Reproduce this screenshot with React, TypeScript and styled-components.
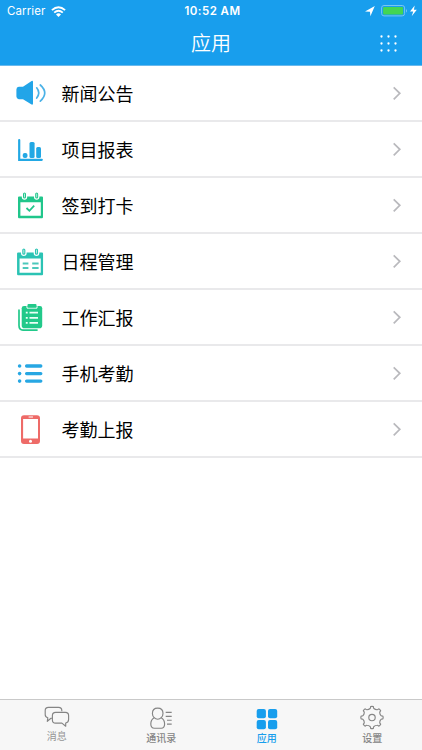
import React from 'react';
import styled, { createGlobalStyle } from 'styled-components';

const GlobalStyle = createGlobalStyle`
  * { box-sizing: border-box; }
  body { margin: 0; background: #fff; }
  svg { display: block; flex: none; }
`;

const Screen = styled.div`
  width: 100%;
  height: 750px;
  display: flex;
  flex-direction: column;
  overflow: hidden;
  background: #fff;
  font-family: Inter, 'Noto Sans CJK SC', sans-serif;
`;

const Header = styled.header`
  height: 66px;
  flex: none;
  background: #189eed;
  border-bottom: 1px solid #69b9ed;
  color: #fff;
`;

const StatusBar = styled.div`
  height: 22px;
  display: grid;
  grid-template-columns: 1fr auto 1fr;
  align-items: center;
  padding: 0 4px 0 7px;
  font-size: 11.5px;
  line-height: 22px;
`;

const StatusGroup = styled.div<{ $end?: boolean }>`
  display: flex;
  align-items: center;
  justify-content: ${(p) => (p.$end ? 'flex-end' : 'flex-start')};
  gap: 6px;
`;

const Carrier = styled.span`
  font-size: 11.5px;
  letter-spacing: 0.1px;
`;

const Clock = styled.span`
  font-weight: 600;
  font-size: 11.5px;
  letter-spacing: 0.45px;
`;

const NavBar = styled.div`
  height: 43px;
  display: grid;
  grid-template-columns: 1fr auto 1fr;
  align-items: center;
`;

const Title = styled.h1`
  grid-column: 2;
  margin: 0;
  padding-top: 2px;
  font-size: 20px;
  line-height: 41px;
  font-weight: 350;
`;

const MenuButton = styled.button`
  justify-self: end;
  margin-right: 25px;
  padding: 0;
  border: 0;
  background: none;
`;

const List = styled.ul`
  flex: 1;
  margin: 0;
  padding: 0;
  list-style: none;
`;

const Row = styled.li`
  height: 56px;
  display: flex;
  align-items: center;
  padding: 0 20px 0 14px;
  border-bottom: 2px solid #e9e9eb;
`;

const RowLabel = styled.span`
  flex: 1;
  margin-left: 14.5px;
  padding-top: 4px;
  font-size: 18px;
  line-height: 50px;
  color: #000;
`;

const TabBar = styled.nav`
  height: 51px;
  flex: none;
  display: grid;
  grid-template-columns: repeat(4, 1fr);
  background: #f7f7f7;
  border-top: 1px solid #c9c9c9;
`;

const Tab = styled.div<{ $active?: boolean; $raised?: boolean }>`
  display: flex;
  flex-direction: column;
  align-items: center;
  padding: 4px 0 0 ${(p) => (p.$raised ? '8px' : '6px')};
  color: ${(p) => (p.$active ? '#189eed' : '#858585')};
`;

const TabLabel = styled.span<{ $raised?: boolean }>`
  margin-top: ${(p) => (p.$raised ? '-2px' : '0')};
  font-size: 10px;
  line-height: 14px;
  font-weight: ${(p) => (p.$raised ? 400 : 500)};
  opacity: ${(p) => (p.$raised ? 0.85 : 1)};
`;

const Icon = ({ color, drop = 0, children }: { color: string; drop?: number; children: React.ReactNode }) => (
  <svg width="33" height="32" viewBox={`0 ${-drop} 33 32`} fill={color} stroke="none">{children}</svg>
);

const Speaker = () => (
  <Icon color="#22a5e8">
    <path d="M4.8 9.8H9L17.6 4Q19 3.4 19 5V26.6Q19 28.2 17.6 27.6L9 22.2H4.8Q2.4 22 2.4 19.6V12.4Q2.4 10 4.8 9.8Z" />
    <path d="M22.7 10.8Q26.8 15.8 22.7 21M26.3 8Q35.2 16 26.3 24.2" fill="none" stroke="#4bb2e7" strokeWidth="1.7" strokeLinecap="round" />
  </Icon>
);

const BarChart = () => (
  <Icon color="#22a8e4" drop={1}>
    <path d="M5.2 6V25.8H27.8" fill="none" stroke="#22a8e4" strokeWidth="2.2" strokeLinecap="round" />
    <rect x="8.7" y="19" width="4.8" height="5" rx="2" />
    <rect x="15.5" y="8" width="5.1" height="16" rx="1.5" />
    <rect x="22.2" y="13" width="4.8" height="11" rx="1.5" />
  </Icon>
);

const CalendarFrame = ({ color }: { color: string }) => (
  <>
    <path fillRule="evenodd" d="M5 6.4H28Q29 6.4 29 7.4V27Q29 28.2 28 28.2H5Q4 28.2 4 27V7.4Q4 6.4 5 6.4ZM6.4 12.2V25.8H26.8V12.2Z" />
    <g fill={color} stroke="#fff" strokeWidth="1.2">
      <rect x="8.4" y="2" width="4.2" height="7.2" rx="2.1" />
      <rect x="20.6" y="2" width="4.2" height="7.2" rx="2.1" />
    </g>
    <path d="M10.5 4V7M22.7 4V7" stroke="#b6eedc" strokeWidth="1" strokeLinecap="round" />
  </>
);

const CheckCalendar = () => (
  <Icon color="#20c68b" drop={1}>
    <CalendarFrame color="#20c68b" />
    <path d="M12.5 18L15.4 20.8L20.2 15.7" fill="none" stroke="#20c68b" strokeWidth="1.8" />
  </Icon>
);

const ScheduleCalendar = () => (
  <Icon color="#2bc3b4" drop={1.5}>
    <g transform="translate(-1.1 -.7) scale(1.04)"><CalendarFrame color="#2bc3b4" /></g>
    <path d="M8.7 16.9H14.4M18.2 16.9H24.6M8.7 21.6H14.4M18.2 21.6H24.6" stroke="#4cc8bb" strokeWidth="2" />
  </Icon>
);

const Clipboard = () => (
  <Icon color="#22c98a" drop={1}>
    <path d="M5 8.2V23.6Q5 28.1 9 28.1H23" fill="none" stroke="#22c98a" strokeWidth="1.7" strokeLinecap="round" />
    <path d="M10 4.1H26Q28.2 4.1 28.2 6.3V23.4Q28.2 26.2 25.4 26.2H10.5Q7.7 26.2 7.7 23.4V6.3Q7.7 4.1 10 4.1Z" />
    <path d="M13 3.1V6.1H23V3.1" fill="none" stroke="#fff" strokeWidth="1" />
    <rect x="13.5" y="2" width="9" height="3.6" rx="1" />
    <path d="M11.8 10.7H13.7M15.5 10.7H24M11.8 15.8H13.7M15.5 15.8H24M11.8 20.9H13.7M15.5 20.9H24" stroke="#ecfff7" strokeWidth="1.7" />
  </Icon>
);

const BulletList = () => (
  <Icon color="#27a7e3" drop={0.6}>
    <circle cx="5.6" cy="8.4" r="1.8" /><circle cx="5.6" cy="16" r="1.8" /><circle cx="5.6" cy="23.5" r="1.8" />
    <path d="M12.6 8.4H26.8M12.6 16H26.8M12.6 23.5H26.8" stroke="#27a7e3" strokeWidth="3.3" strokeLinecap="round" />
  </Icon>
);

const Phone = () => (
  <Icon color="#ee6b68" drop={0.4}>
    <path fillRule="evenodd" d="M10 1.8H23Q26 1.8 26 4.8V27.6Q26 30.5 23 30.5H10Q7 30.5 7 27.6V4.8Q7 1.8 10 1.8ZM9.1 5.5V25H24V5.5Z" />
    <path d="M15 3.6H18.6" stroke="#fff" strokeWidth="1" strokeLinecap="round" /><circle cx="16.5" cy="27.8" r="1.5" fill="#fff" />
  </Icon>
);

const Chevron = () => (
  <svg width="10" height="14" viewBox="0 0 10 14" fill="none" stroke="#b9b9bd" strokeWidth="1.7">
    <path d="M1.7 1.3L7.8 7.3L1.7 13.3" />
  </svg>
);

const Wifi = () => (
  <svg width="15" height="11" viewBox="0 0 15 11" fill="none" stroke="#fff" strokeWidth="1.9">
    <path d="M.9 4.1Q7.5-1.7 14.1 4.1M3.2 6.6Q7.5 2.9 11.8 6.6" />
    <path d="M5 8.4Q7.5 6.2 10 8.4L7.5 10.9Z" fill="#fff" stroke="none" />
  </svg>
);

const StatusSymbols = () => (
  <svg width="53" height="14" viewBox="0 0 53 14">
    <path d="M0 7.4L9.8 1.9L5.4 12.2L5 7.8Z" fill="#fff" />
    <rect x="16.6" y="1.5" width="23" height="10.4" rx="2.4" fill="none" stroke="#78c6f2" strokeWidth="1" />
    <rect x="18.1" y="3" width="20" height="7.4" rx="1" fill="#43d553" />
    <path d="M41 4.7Q42.6 6.7 41 8.7Z" fill="#91d2f5" />
    <path d="M49.7 1.4L45 7.5H48.2L46.7 12.2L51.8 5.8H48.9Z" fill="#fff" />
  </svg>
);

const DotGrid = () => (
  <svg width="17" height="17" viewBox="0 0 17 17" fill="#fff">
    {[1.5, 8.5, 15.5].map((y) => [1.5, 8.5, 15.5].map((x) => <circle key={`${x}-${y}`} cx={x} cy={y} r="1.15" />))}
  </svg>
);

const TabIcon = ({ children }: { children: React.ReactNode }) => (
  <svg width="28" height="27" viewBox="0 0 28 27" fill="none" stroke="currentColor" strokeWidth="1.15" strokeLinejoin="round">{children}</svg>
);

const Chats = () => (
  <TabIcon>
    <path d="M9.6 14.2H8L4.3 17.3L4.8 13.7Q2.2 13.1 2.2 10.5V6.5Q2.2 3.3 5.4 3.3H15.6Q18.8 3.3 18.8 6.5V7.3" />
    <path d="M12.6 8.3H22.4Q25.6 8.3 25.6 11.5V15.6Q25.6 18.4 22.7 19V22.2L18.9 19.1H12.6Q9.4 19.1 9.4 15.9V11.5Q9.4 8.3 12.6 8.3Z" />
  </TabIcon>
);

const Contacts = () => (
  <TabIcon>
    <path d="M7.2 13.7Q5.4 11.9 5.4 9.4Q5.4 4.1 10.7 4.1Q16 4.1 16 9.4Q16 11.9 14.2 13.7Q12.8 15.2 10.7 15.2Q8.6 15.2 7.2 13.7Z" />
    <path d="M7.2 13.7Q3.8 15.6 3.8 20Q3.8 24.2 7.5 24.2H14.2Q17.6 24.2 17.6 20Q17.6 15.6 14.2 13.7" />
    <path d="M18.7 8.4H24.7M18.7 12.3H24.7M20 16.2H24.7M20 20.1H24.7" />
  </TabIcon>
);

const Apps = () => (
  <TabIcon>
    <g fill="currentColor" stroke="none">
      <rect x="3.7" y="5" width="9.2" height="9.2" rx="2" /><rect x="15" y="5" width="9.2" height="9.2" rx="2" />
      <rect x="3.7" y="16" width="9.2" height="9.2" rx="2" /><rect x="15" y="16" width="9.2" height="9.2" rx="2" />
    </g>
  </TabIcon>
);

const gearPath = Array.from({ length: 8 }, (_, i) => {
  const at = (deg: number, r: number) => {
    const a = ((i * 45 + deg - 90) * Math.PI) / 180;
    return `${(14 + r * Math.cos(a)).toFixed(2)} ${(13.5 + r * Math.sin(a)).toFixed(2)}`;
  };
  return `${i ? 'L' : 'M'}${at(-12, 9.2)}Q${at(-8, 9.6)} ${at(-7, 11)}Q${at(0, 11.4)} ${at(7, 11)}Q${at(8, 9.6)} ${at(12, 9.2)}Q${at(22.5, 8.4)} ${at(33, 9.2)}`;
}).join('') + 'Z';

const Settings = () => (
  <TabIcon>
    <path d={gearPath} />
    <circle cx="14" cy="13.5" r="3.2" />
  </TabIcon>
);

const apps = [
  { label: '新闻公告', icon: <Speaker /> },
  { label: '项目报表', icon: <BarChart /> },
  { label: '签到打卡', icon: <CheckCalendar /> },
  { label: '日程管理', icon: <ScheduleCalendar /> },
  { label: '工作汇报', icon: <Clipboard /> },
  { label: '手机考勤', icon: <BulletList /> },
  { label: '考勤上报', icon: <Phone /> },
];

const tabs = [
  { label: '消息', icon: <Chats />, raised: true },
  { label: '通讯录', icon: <Contacts /> },
  { label: '应用', icon: <Apps />, active: true },
  { label: '设置', icon: <Settings /> },
];

export default function App() {
  return (
    <Screen>
      <GlobalStyle />
      <Header>
        <StatusBar>
          <StatusGroup><Carrier>Carrier</Carrier><Wifi /></StatusGroup>
          <Clock>10:52 AM</Clock>
          <StatusGroup $end><StatusSymbols /></StatusGroup>
        </StatusBar>
        <NavBar>
          <Title>应用</Title>
          <MenuButton aria-label="菜单"><DotGrid /></MenuButton>
        </NavBar>
      </Header>
      <List>
        {apps.map((app) => (
          <Row key={app.label}>{app.icon}<RowLabel>{app.label}</RowLabel><Chevron /></Row>
        ))}
      </List>
      <TabBar>
        {tabs.map((tab) => (
          <Tab key={tab.label} $active={tab.active} $raised={tab.raised}>{tab.icon}<TabLabel $raised={tab.raised}>{tab.label}</TabLabel></Tab>
        ))}
      </TabBar>
    </Screen>
  );
}
